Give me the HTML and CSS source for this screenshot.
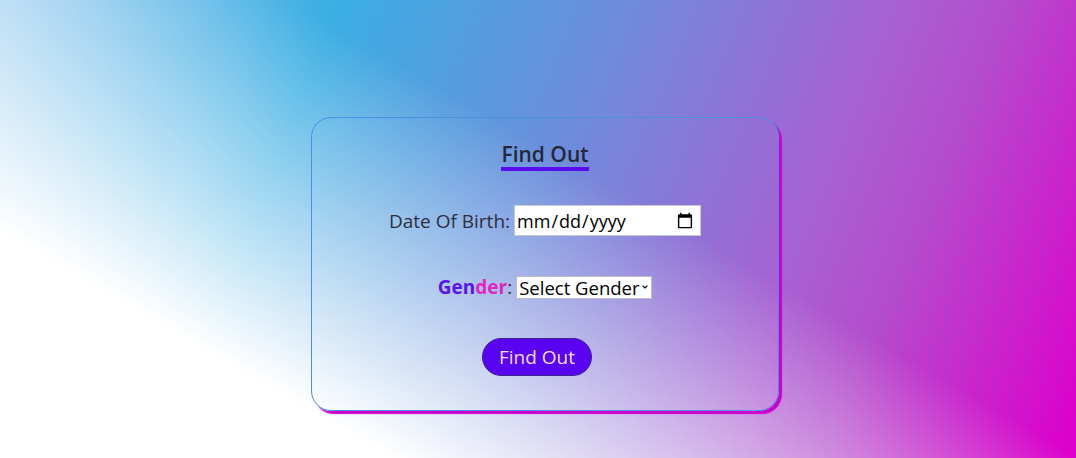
FILE: index.html
```html
<!DOCTYPE html>
<html lang="en">
<head>
<meta charset="utf-8">
<title>Find Out</title>
<link rel="stylesheet" href="styles.css">
</head>
<body>
<main class="page">
  <form class="card">
    <h1 class="title"><span class="title-text">Find Out</span></h1>
    <div class="row row-date">
      <label class="label" for="dob">Date Of Birth:</label>
      <input class="date" id="dob" type="date">
    </div>
    <div class="row row-gender">
      <label class="label" for="gender"><span class="g1">Gen</span><span class="g2">der</span>:</label>
      <select class="select" id="gender">
        <option>Select Gender</option>
        <option>Male</option>
        <option>Female</option>
      </select>
    </div>
    <button class="btn" type="button">Find Out</button>
  </form>
</main>
</body>
</html>
```

FILE: styles.css
```css
html, body {
  margin: 0;
  height: 100%;
}
body {
  font-family: "Open Sans", "Noto Sans", sans-serif;
  color: #2b2b3a;
  background:
    linear-gradient(30deg, #ffffff 21%, rgba(255,255,255,0) 58%),
    linear-gradient(112deg, #92c8ee 0%, #3aaee3 27%, #6a8fdc 48%, #a95fd2 72%, #b44ccc 80%, #dc00cc 99%);
  overflow: hidden;
}
.page {
  display: flex;
  justify-content: center;
  padding: 117px 0 0 14px;
}
.card {
  box-sizing: border-box;
  width: 468px;
  height: 294px;
  border: 1px solid #4a8fe0;
  border-radius: 20px;
  box-shadow: 3px 3px 1px #cc00cc;
  display: flex;
  flex-direction: column;
  align-items: center;
  padding-top: 22px;
}
.title {
  margin: 0;
  font-size: 21px;
  font-weight: 600;
  line-height: 28px;
  color: #22283a;
}
.title-text {
  display: inline-block;
  border-bottom: 4px solid #5a0cf0;
  line-height: 25px;
}
.row {
  display: flex;
  align-items: center;
  gap: 4px;
}
.row-date { margin-top: 34px; }
.row-gender { margin-top: 38px; }
.label {
  font-size: 19px;
  color: #2e2e40;
}
.g1, .g2 { font-weight: 700; }
.g1 { color: #5a12ee; }
.g2 { color: #e226c4; }
.date {
  box-sizing: border-box;
  width: 187px;
  height: 31px;
  font-family: inherit;
  font-size: 18px;
  border: 1px solid #c8c8d0;
  padding: 0 4px 0 1px;
  background: #fff;
  color: #000;
}
.select {
  box-sizing: border-box;
  width: 136px;
  height: 23px;
  font-family: inherit;
  font-size: 18.5px;
  line-height: 21px;
  border: 1px solid #bdbdc6;
  border-radius: 0;
  padding: 0 0 0 2px;
  -webkit-appearance: none;
  appearance: none;
  background: #fff url("data:image/svg+xml,%3Csvg xmlns='http://www.w3.org/2000/svg' width='6' height='4' viewBox='0 0 6 4'%3E%3Cpath d='M0.6 0.6 L3 3 L5.4 0.6' fill='none' stroke='%23000' stroke-width='1.2'/%3E%3C/svg%3E") no-repeat right 3px center;
  color: #000;
}
.btn {
  margin: 38px 16px 0 0;
  box-sizing: border-box;
  width: 110px;
  height: 38px;
  border-radius: 19px;
  border: 1px solid #3b2494;
  background: #5a03f2;
  color: #f5dcff;
  font-family: inherit;
  font-size: 19px;
  cursor: pointer;
}
```
